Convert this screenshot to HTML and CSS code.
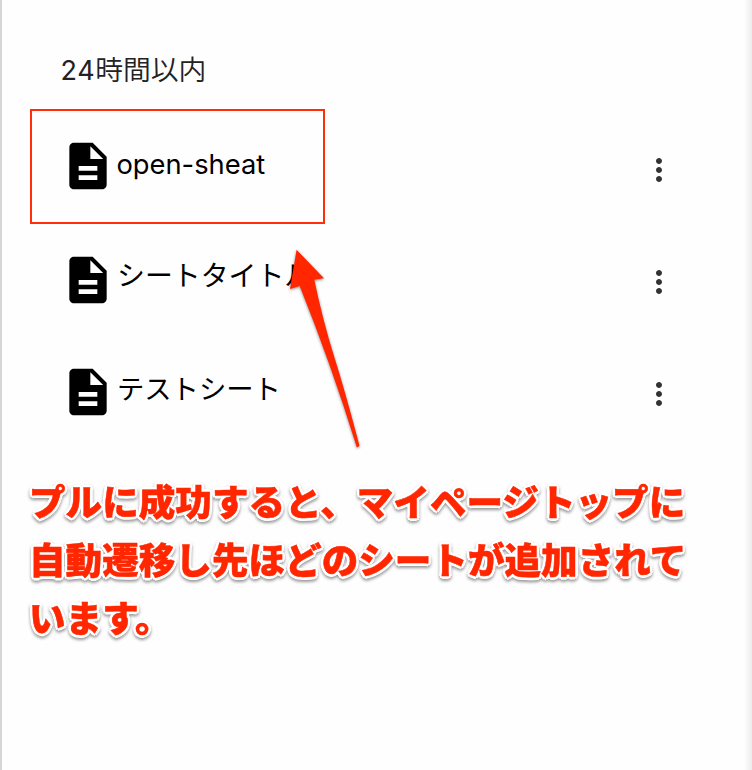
FILE: index.html
```html
<!DOCTYPE html>
<html lang="ja">
<head>
<meta charset="utf-8">
<title>マイページ</title>
<link rel="stylesheet" href="styles.css">
</head>
<body>
<svg class="defs" width="0" height="0">
  <symbol id="doc" viewBox="0 0 24 24"><path d="M14 2H6c-1.1 0-1.99.9-1.99 2L4 20c0 1.1.89 2 1.99 2H18c1.1 0 2-.9 2-2V8l-6-6zm2 16H8v-2h8v2zm0-4H8v-2h8v2zm-3-5V3.5L18.5 9H13z"/></symbol>
  <symbol id="more" viewBox="0 0 24 24"><path d="M12 8c1.1 0 2-.9 2-2s-.9-2-2-2-2 .9-2 2 .9 2 2 2zm0 2c-1.1 0-2 .9-2 2s.9 2 2 2 2-.9 2-2-.9-2-2-2zm0 6c-1.1 0-2 .9-2 2s.9 2 2 2 2-.9 2-2-.9-2-2-2z"/></symbol>
</svg>
<main class="page">
  <h2 class="heading"><span class="digits">24</span>時間以内</h2>
  <ul class="sheets">
    <li class="sheet">
      <svg class="doc first"><use href="#doc"/></svg>
      <span class="name latin">open-sheat</span>
      <svg class="more"><use href="#more"/></svg>
    </li>
    <li class="sheet">
      <svg class="doc"><use href="#doc"/></svg>
      <span class="name title">シートタイトル</span>
      <svg class="more"><use href="#more"/></svg>
    </li>
    <li class="sheet">
      <svg class="doc"><use href="#doc"/></svg>
      <span class="name">テストシート</span>
      <svg class="more"><use href="#more"/></svg>
    </li>
  </ul>
  <p class="note">プルに成功すると、マイページトップに<br>自動遷移し先ほどのシートが追加されて<br>います。</p>
</main>
<div class="highlight"></div>
<svg class="arrow" viewBox="280 240 90 220"><path d="M296.6 249.8L324 278.3L314.3 279.7Q323 321 334.3 357T359.4 445.5Q358.5 447.5 356.8 447.2Q331 364 299.7 286L290 289Z"/></svg>
</body>
</html>
```
FILE: styles.css
```css
* { box-sizing: border-box; }
body {
  margin: 0;
  height: 770px;
  overflow: hidden;
  position: relative;
  background: #fefefe;
  color: #000;
  font-family: "Noto Sans CJK JP", sans-serif;
}
.defs { position: absolute; }
.page {
  height: 770px;
  padding: 48px 0 0 29px;
  border-left: 2px solid #d5d5d5;
  background: linear-gradient(to left, #ececec, #fefefe 8px);
}
.heading {
  margin: 0 0 0 29.5px;
  height: 40px;
  line-height: 40px;
  font-size: 27.8px;
  font-weight: 350;
  color: #222;
}
.digits { font-family: Inter, sans-serif; font-size: 27px; letter-spacing: .6px; font-weight: 400; }
.sheets { list-style: none; margin: 26px 0 0; padding: 0 0 0 29px; }
.sheet {
  display: flex;
  align-items: center;
  width: 617px;
  height: 112px;
}
.doc { width: 56px; height: 56px; flex: none; margin-top: -5px; }
.doc.first { margin-top: -9px; }
.name {
  flex: 1;
  line-height: 40px;
  margin: -14px 0 0 1px;
  font-size: 27.3px;
}
.title { margin-top: -17px; font-size: 27.9px; }
.latin { font-family: Inter, sans-serif; font-size: 27.3px; margin: -11px 0 0 .5px; }
.more { width: 36px; height: 36px; flex: none; fill: #333; }
.note {
  margin: 22px 0 0 -2px;
  color: #ff2600;
  font-size: 36.6px;
  font-weight: 900;
  line-height: 58px;
  white-space: nowrap;
  -webkit-text-stroke: .5px #ff2600;
  text-shadow: 2.8px 0 #fff, -2.8px 0 #fff, 0 2.8px #fff, 0 -2.8px #fff,
    2px 2px #fff, -2px 2px #fff, 2px -2px #fff, -2px -2px #fff;
  filter: drop-shadow(0 2px 1.5px rgba(0, 0, 0, .4));
}
.highlight {
  position: absolute;
  left: 30px;
  top: 109px;
  width: 295px;
  height: 115px;
  border: 2px solid #ff2d0c;
}
.arrow {
  position: absolute;
  left: 280px;
  top: 240px;
  width: 90px;
  height: 220px;
  fill: #ff2600;
  filter: drop-shadow(0 1px 1.5px rgba(0, 0, 0, .45));
}
```
